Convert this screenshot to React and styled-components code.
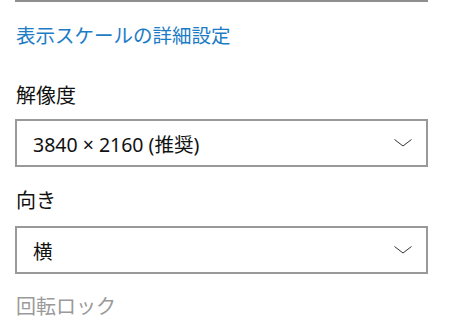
import React from 'react';
import styled, { createGlobalStyle } from 'styled-components';

const Global = createGlobalStyle`
  body {
    margin: 0;
    background: #fff;
    font-family: "Noto Sans CJK JP", "Noto Sans", sans-serif;
  }
`;

const Page = styled.div`
  width: 413px;
  padding-left: 15px;
  display: flex;
  flex-direction: column;
`;

const Divider = styled.div`
  height: 2px;
  background: #8f8f8f;
`;

const Link = styled.a`
  margin-top: 19px;
  font-size: 19.5px;
  line-height: 28px;
  color: #1d7cc6;
  text-decoration: none;
  padding-left: 1px;
`;

const Label = styled.div`
  margin-top: ${(p) => p.$gap}px;
  font-size: 20px;
  line-height: 28px;
  color: ${(p) => (p.$disabled ? '#9a9a9a' : '#111')};
  padding-left: 1px;
`;

const Select = styled.div`
  margin-top: ${(p) => p.$gap}px;
  height: 48px;
  box-sizing: border-box;
  border: 2px solid #999;
  display: flex;
  align-items: center;
  justify-content: space-between;
  padding: 0 14px 0 16px;
  font-size: 20px;
  color: #111;
`;

const Value = styled.span`
  font-family: "Noto Sans", "Noto Sans CJK JP", sans-serif;
  font-size: 19.5px;
`;

const Chevron = () => (
  <svg width="18" height="8" viewBox="0 0 18 8">
    <polyline points="0.5,0.5 9,7 17.5,0.5" fill="none" stroke="#333" strokeWidth="1" />
  </svg>
);

export default function App() {
  return (
    <>
      <Global />
      <Page>
        <Divider />
        <Link href="#">表示スケールの詳細設定</Link>
        <Label $gap={32}>解像度</Label>
        <Select $gap={10}>
          <Value>3840 × 2160 (推奨)</Value>
          <Chevron />
        </Select>
        <Label $gap={19}>向き</Label>
        <Select $gap={12}>
          <Value>横</Value>
          <Chevron />
        </Select>
        <Label $gap={18} $disabled>回転ロック</Label>
      </Page>
    </>
  );
}
